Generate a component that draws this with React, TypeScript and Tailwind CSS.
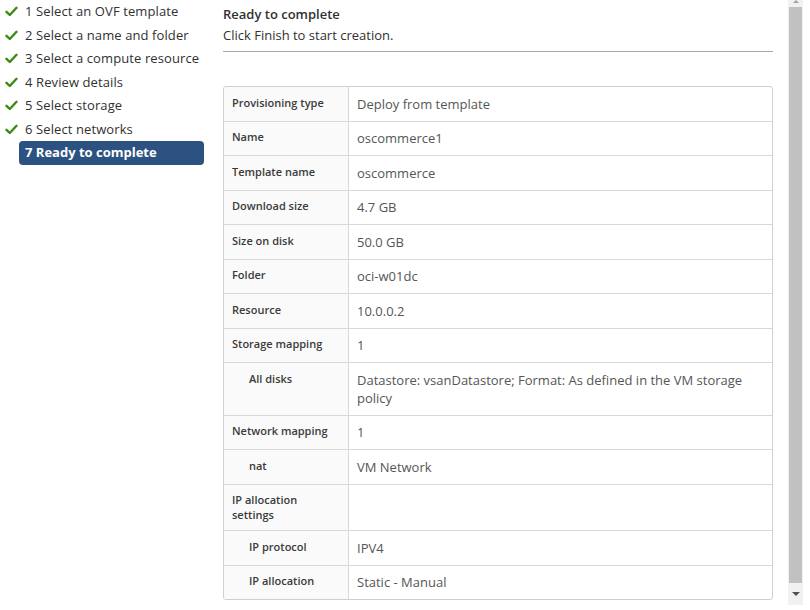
import React from 'react';

const steps = [
  '1 Select an OVF template',
  '2 Select a name and folder',
  '3 Select a compute resource',
  '4 Review details',
  '5 Select storage',
  '6 Select networks',
];

interface Row {
  label: string;
  value: string;
  indent?: boolean;
}

const rows: Row[] = [
  { label: 'Provisioning type', value: 'Deploy from template' },
  { label: 'Name', value: 'oscommerce1' },
  { label: 'Template name', value: 'oscommerce' },
  { label: 'Download size', value: '4.7 GB' },
  { label: 'Size on disk', value: '50.0 GB' },
  { label: 'Folder', value: 'oci-w01dc' },
  { label: 'Resource', value: '10.0.0.2' },
  { label: 'Storage mapping', value: '1' },
  { label: 'All disks', value: 'Datastore: vsanDatastore; Format: As defined in the VM storage policy', indent: true },
  { label: 'Network mapping', value: '1' },
  { label: 'nat', value: 'VM Network', indent: true },
  { label: 'IP allocation settings', value: '' },
  { label: 'IP protocol', value: 'IPV4', indent: true },
  { label: 'IP allocation', value: 'Static - Manual', indent: true },
];

const Check = () => (
  <svg width="13" height="11" viewBox="0 0 13 11" className="shrink-0">
    <path d="M1.5 5.8 L4.8 9 L11.5 1.8" fill="none" stroke="#3a8a14" strokeWidth="2.4" strokeLinecap="round" strokeLinejoin="round" />
  </svg>
);

export default function App() {
  return (
    <div
      className="w-[810px] h-[610px] bg-white flex overflow-hidden text-[#313131]"
      style={{ fontFamily: '"Open Sans", Lato, "Liberation Sans", sans-serif' }}
    >
      {/* Steps */}
      <div className="w-[223px] shrink-0">
        {steps.map((s) => (
          <div key={s} className="h-[23.5px] flex items-center gap-[7px] pl-[5px] text-[13px] tracking-[0.1px]">
            <Check />
            <span>{s}</span>
          </div>
        ))}
        <div className="ml-[19px] w-[185px] h-[24px] rounded-[4px] bg-[#2b5281] text-white font-bold text-[13px] flex items-center pl-[6px]">
          7 Ready to complete
        </div>
      </div>

      {/* Content */}
      <div className="w-[550px] shrink-0">
        <div className="pt-[5px] pb-[7px] border-b border-[#a8a8a8]">
          <div className="text-[13px] font-semibold leading-[18px]">Ready to complete</div>
          <div className="text-[13px] leading-[18px] mt-[3px]">Click Finish to start creation.</div>
        </div>
        <div className="mt-[34px] border border-[#cfcfcf] rounded-[3px] overflow-hidden">
          {rows.map((r, i) => (
            <div key={r.label} className={`flex ${i < rows.length - 1 ? 'border-b border-[#d8d8d8]' : ''}`}>
              <div
                className={`w-[125px] shrink-0 bg-[#fafafa] border-r border-[#d8d8d8] py-[7.75px] pr-[8px] text-[11px] font-semibold leading-[15px] text-[#3a3a3a] ${
                  r.indent ? 'pl-[25px]' : 'pl-[8px]'
                }`}
              >
                {r.label}
              </div>
              <div className="flex-1 py-[7.75px] pl-[8px] pr-[12px] text-[13px] leading-[18px] text-[#565656]">
                {r.value}
              </div>
            </div>
          ))}
        </div>
      </div>

      {/* Scrollbar */}
      <div className="w-[15px] ml-[15px] h-[605px] bg-[#f1f1f1] flex flex-col items-center">
        <div className="h-[6px] w-full flex justify-center items-start">
          <div className="w-0 h-0 border-l-[3px] border-r-[3px] border-b-[3px] border-l-transparent border-r-transparent border-b-[#a3a3a3]" />
        </div>
        <div className="w-[13px] flex-1 bg-[#c1c1c1] mt-[1px]" />
        <div className="h-[22px] w-full flex justify-center items-center">
          <div className="w-0 h-0 border-l-[4px] border-r-[4px] border-t-[4px] border-l-transparent border-r-transparent border-t-[#505050]" />
        </div>
      </div>
    </div>
  );
}
